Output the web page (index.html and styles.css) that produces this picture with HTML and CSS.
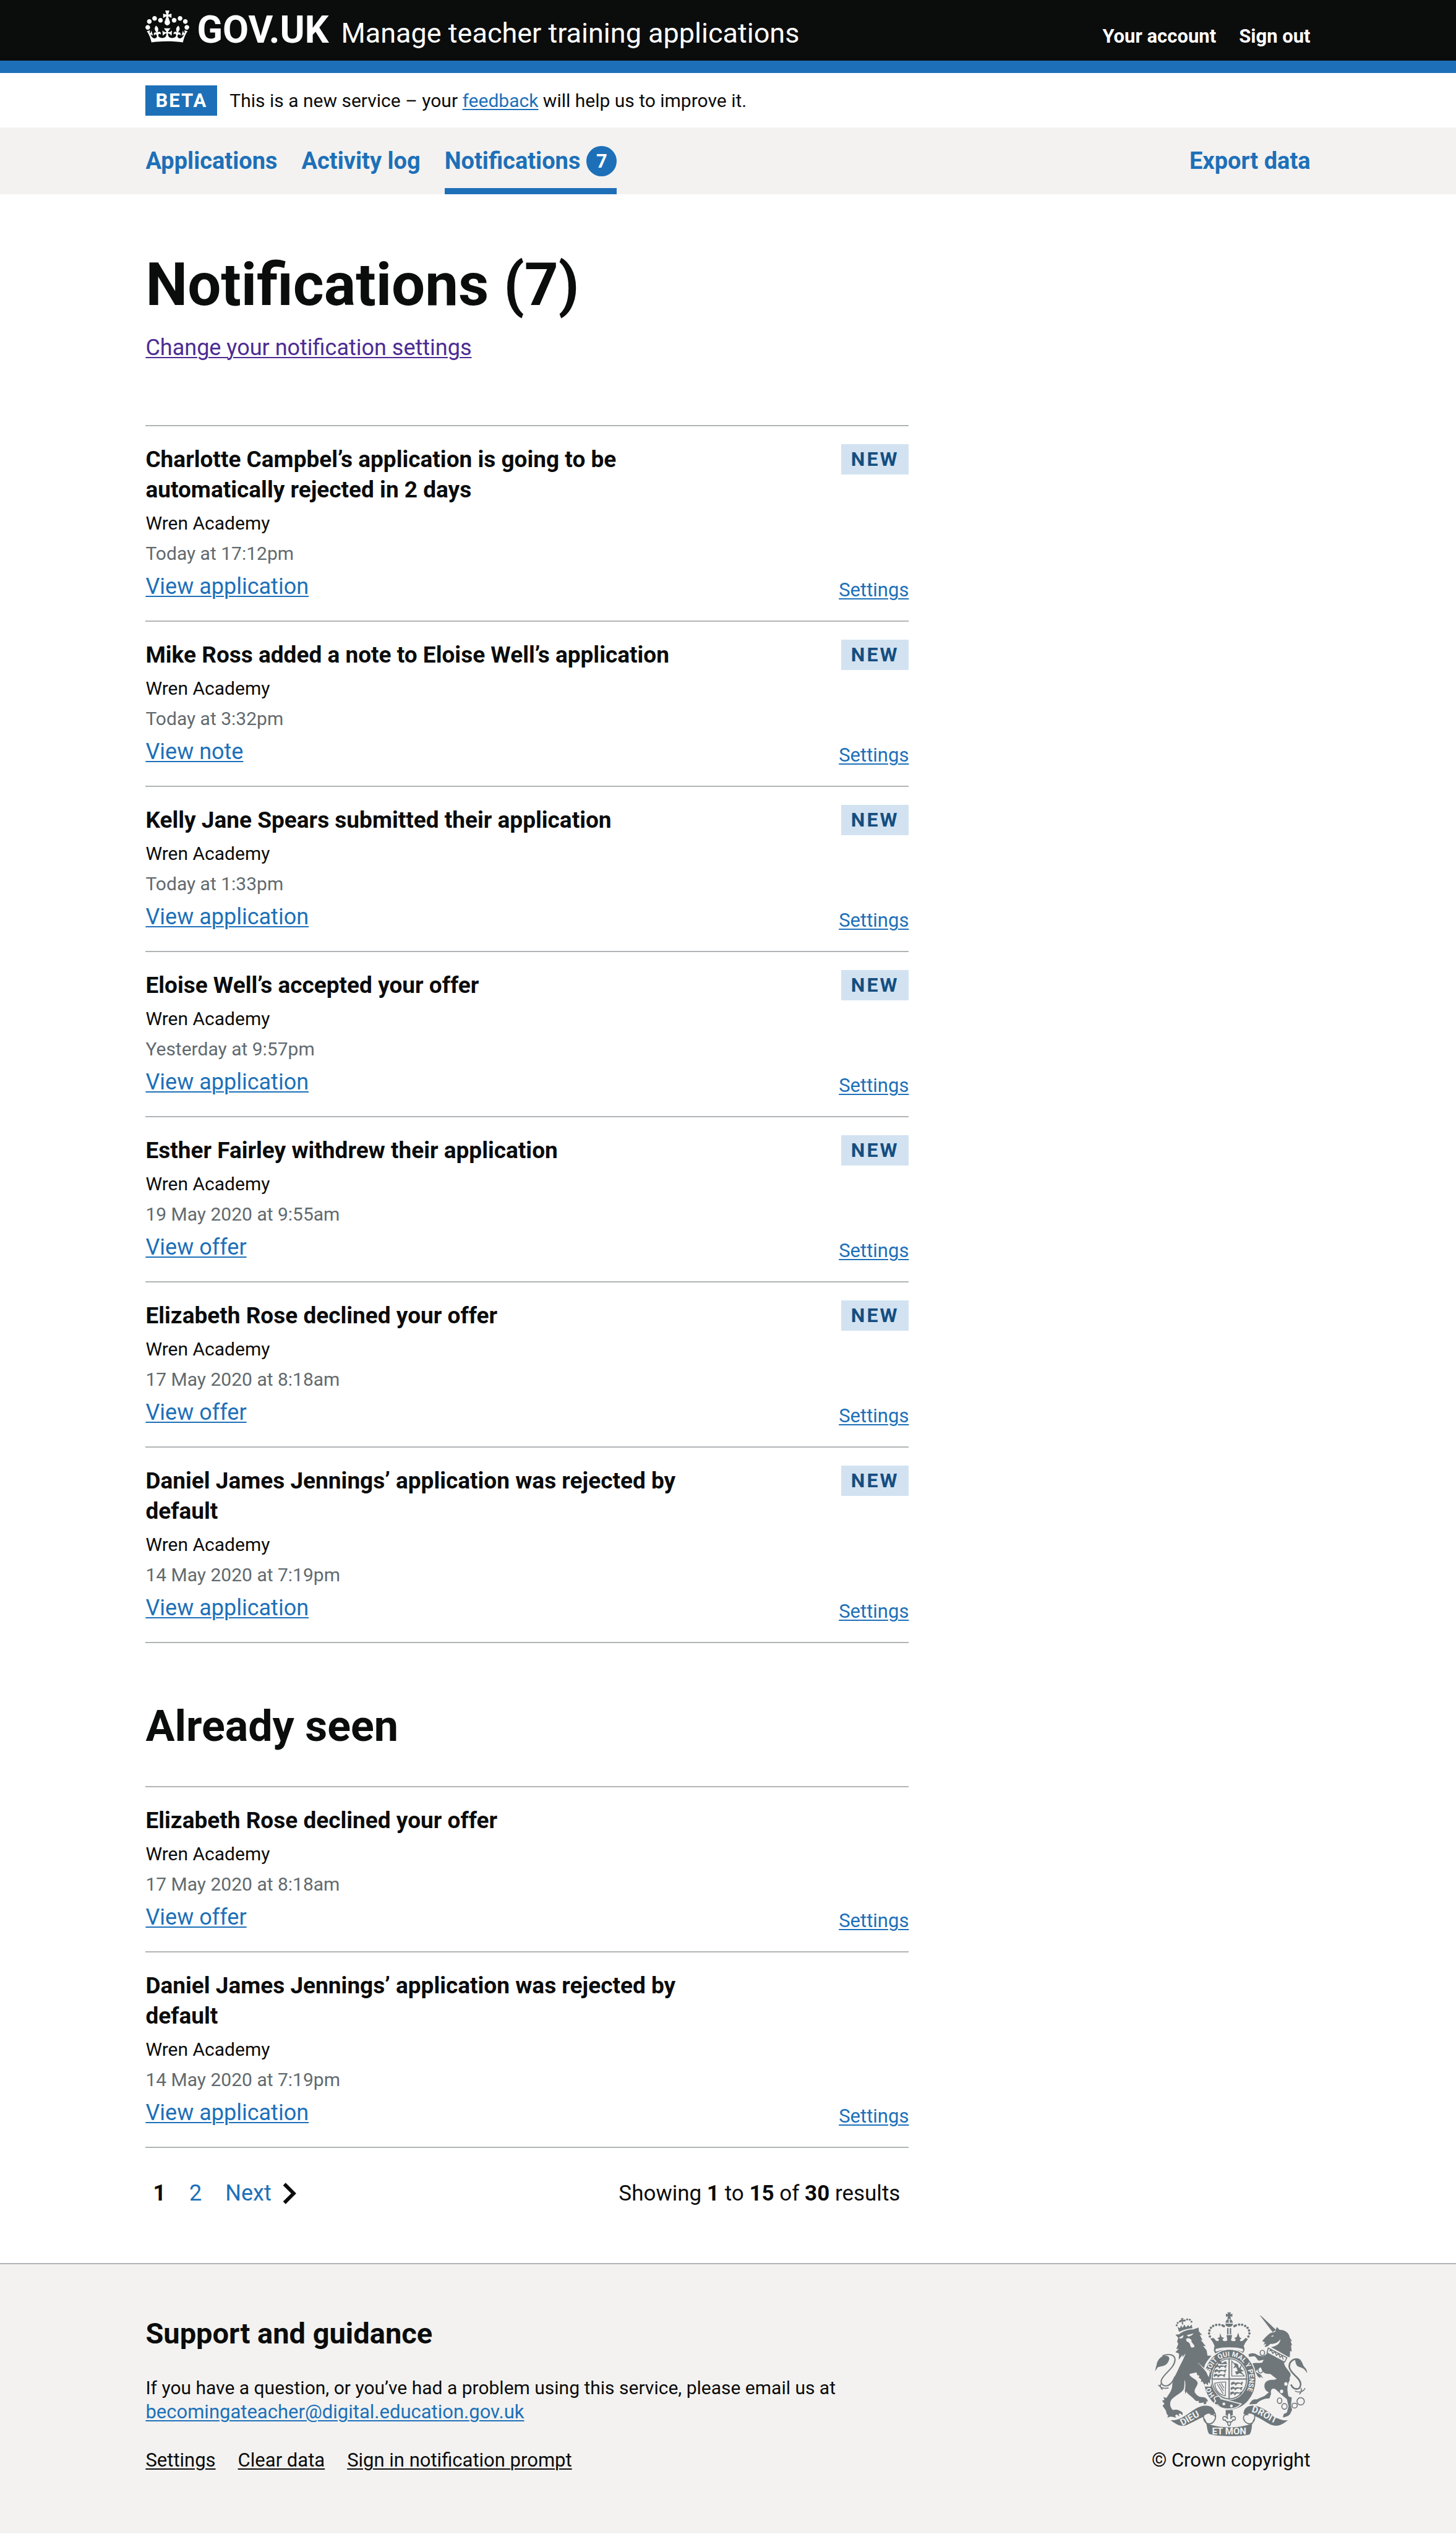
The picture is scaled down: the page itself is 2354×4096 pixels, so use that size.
FILE: index.html
```html
<!DOCTYPE html>
<html lang="en">
<head>
<meta charset="utf-8">
<meta name="viewport" content="width=device-width, initial-scale=1">
<title>Notifications (7) - Manage teacher training applications - GOV.UK</title>
<link rel="stylesheet" href="styles.css">
</head>
<body>
<header class="header">
  <div class="container header__inner">
    <a class="header__logo" href="#">
      <svg class="header__crown" viewBox="0 0 132 97" aria-hidden="true">
        <path fill="currentColor" fill-rule="evenodd" d="M25 30.2c3.5 1.5 7.7-.2 9.1-3.7 1.5-3.6-.2-7.8-3.9-9.2-3.6-1.4-7.6.3-9.1 3.9-1.4 3.5.3 7.5 3.9 9zM9 39.5c3.6 1.5 7.8-.2 9.2-3.7 1.5-3.6-.2-7.8-3.9-9.1-3.6-1.5-7.6.2-9.1 3.8-1.4 3.5.3 7.5 3.8 9zM4.4 57.2c3.5 1.5 7.7-.2 9.1-3.8 1.5-3.6-.2-7.7-3.9-9.1-3.5-1.5-7.6.3-9.1 3.8-1.4 3.5.3 7.6 3.9 9.1zm38.3-21.4c3.5 1.5 7.7-.2 9.1-3.8 1.5-3.6-.2-7.7-3.9-9.1-3.6-1.5-7.6.3-9.1 3.8-1.3 3.6.4 7.7 3.9 9.1zm64.4-5.6c-3.6 1.5-7.8-.2-9.1-3.7-1.5-3.6.2-7.8 3.8-9.2 3.6-1.4 7.7.3 9.2 3.9 1.3 3.5-.4 7.5-3.9 9zm15.9 9.3c-3.6 1.5-7.7-.2-9.1-3.7-1.5-3.6.2-7.8 3.7-9.1 3.6-1.5 7.7.2 9.2 3.8 1.5 3.5-.3 7.5-3.8 9zm4.7 17.7c-3.6 1.5-7.8-.2-9.2-3.8-1.5-3.6.2-7.7 3.9-9.1 3.6-1.5 7.7.3 9.2 3.8 1.3 3.5-.4 7.6-3.9 9.1zM89.3 35.8c-3.6 1.5-7.8-.2-9.2-3.8-1.4-3.6.2-7.7 3.9-9.1 3.6-1.5 7.7.3 9.2 3.8 1.4 3.6-.3 7.7-3.9 9.1zM69.7 17.7l8.9 4.7V9.3l-8.9 2.8c-.2-.3-.5-.6-.9-.9L72.4 0H59.6l3.5 11.2c-.3.3-.6.5-.9.9l-8.8-2.8v13.1l8.8-4.7c.3.3.6.7.9.9l-5 15.4v.1c-.2.8-.4 1.6-.4 2.4 0 4.1 3.1 7.5 7 8.1h.2c.3 0 .7.1 1 .1.4 0 .7 0 1-.1h.2c4-.6 7.1-4.1 7.1-8.1 0-.8-.1-1.7-.4-2.4V34l-5.1-15.4c.4-.2.7-.6 1-.9zM66 92.8c16.9 0 32.8 1.1 47.1 3.2 4-16.9 8.9-26.7 14-33.5l-9.6-3.4c1 4.9 1.1 7.2 0 10.2-1.5-1.4-3-4.3-4.2-8.7L108.6 76c2.8-2 5-3.2 7.5-3.3-4.4 9.4-10 11.9-13.6 11.2-4.3-.8-6.3-4.6-5.6-7.9 1-4.7 5.7-5.9 8-.5 4.3-8.7-3-11.4-7.6-8.8 7.1-7.2 7.9-13.5 2.1-21.1-8 6.1-8.1 12.3-4.5 20.8-4.7-5.4-12.1-2.5-9.5 6.2 3.4-5.2 7.9-2 7.2 3.1-.6 4.3-6.4 7.8-13.5 7.2-10.3-.9-10.9-8-11.2-13.8 2.5-.5 7.1 1.8 11 7.3L80.2 60c-4.1 4.4-8 5.3-12.3 5.4 1.4-4.4 8-11.6 8-11.6H55.5s6.4 7.2 7.9 11.6c-4.2-.1-8-1-12.3-5.4l1.4 16.4c3.9-5.5 8.5-7.7 10.9-7.3-.3 5.8-.9 12.8-11.1 13.8-7.2.6-12.9-2.9-13.5-7.2-.7-5 3.8-8.3 7.1-3.1 2.7-8.7-4.6-11.6-9.4-6.2 3.7-8.5 3.6-14.7-4.6-20.8-5.8 7.6-5 13.9 2.2 21.1-4.7-2.6-11.9.1-7.7 8.8 2.3-5.5 7.1-4.2 8.1.5.7 3.3-1.3 7.1-5.7 7.9-3.5.7-9-1.8-13.5-11.2 2.5.1 4.7 1.3 7.5 3.3l-4.7-15.4c-1.2 4.4-2.7 7.2-4.3 8.7-1.1-3-.9-5.3 0-10.2l-9.5 3.4c5 6.9 9.9 16.7 14 33.5 14.8-2.1 30.8-3.2 47.7-3.2z"/>
      </svg>
      <span class="header__brand">GOV.UK</span>
    </a>
    <a class="header__service" href="#">Manage teacher training applications</a>
    <nav class="header__links" aria-label="Account">
      <a href="#">Your account</a>
      <a href="#">Sign out</a>
    </nav>
  </div>
</header>

<div class="container phase">
  <strong class="phase__tag">BETA</strong>
  <span class="phase__text">This is a new service – your <a class="link" href="#">feedback</a> will help us to improve it.</span>
</div>

<nav class="primary" aria-label="Primary">
  <div class="container primary__inner">
    <a class="primary__link" href="#">Applications</a>
    <a class="primary__link" href="#">Activity log</a>
    <a class="primary__link primary__link--current" href="#" aria-current="page">Notifications <span class="primary__count">7</span></a>
    <a class="primary__link primary__link--end" href="#">Export data</a>
  </div>
</nav>

<main class="container main">
  <h1 class="title">Notifications (7)</h1>
  <p class="intro"><a class="link link--visited" href="#">Change your notification settings</a></p>

  <ul class="feed">
    <li class="item">
      <div class="item__body">
        <h3 class="item__title">Charlotte Campbel’s application is going to be automatically rejected in 2 days</h3>
        <p class="item__org">Wren Academy</p>
        <p class="item__date">Today at 17:12pm</p>
        <a class="link item__action" href="#">View application</a>
      </div>
      <div class="item__side"><strong class="tag">NEW</strong><a class="link item__settings" href="#">Settings</a></div>
    </li>
    <li class="item">
      <div class="item__body">
        <h3 class="item__title">Mike Ross added a note to Eloise Well’s application</h3>
        <p class="item__org">Wren Academy</p>
        <p class="item__date">Today at 3:32pm</p>
        <a class="link item__action" href="#">View note</a>
      </div>
      <div class="item__side"><strong class="tag">NEW</strong><a class="link item__settings" href="#">Settings</a></div>
    </li>
    <li class="item">
      <div class="item__body">
        <h3 class="item__title">Kelly Jane Spears submitted their application</h3>
        <p class="item__org">Wren Academy</p>
        <p class="item__date">Today at 1:33pm</p>
        <a class="link item__action" href="#">View application</a>
      </div>
      <div class="item__side"><strong class="tag">NEW</strong><a class="link item__settings" href="#">Settings</a></div>
    </li>
    <li class="item">
      <div class="item__body">
        <h3 class="item__title">Eloise Well’s accepted your offer</h3>
        <p class="item__org">Wren Academy</p>
        <p class="item__date">Yesterday at 9:57pm</p>
        <a class="link item__action" href="#">View application</a>
      </div>
      <div class="item__side"><strong class="tag">NEW</strong><a class="link item__settings" href="#">Settings</a></div>
    </li>
    <li class="item">
      <div class="item__body">
        <h3 class="item__title">Esther Fairley withdrew their application</h3>
        <p class="item__org">Wren Academy</p>
        <p class="item__date">19 May 2020 at 9:55am</p>
        <a class="link item__action" href="#">View offer</a>
      </div>
      <div class="item__side"><strong class="tag">NEW</strong><a class="link item__settings" href="#">Settings</a></div>
    </li>
    <li class="item">
      <div class="item__body">
        <h3 class="item__title">Elizabeth Rose declined your offer</h3>
        <p class="item__org">Wren Academy</p>
        <p class="item__date">17 May 2020 at 8:18am</p>
        <a class="link item__action" href="#">View offer</a>
      </div>
      <div class="item__side"><strong class="tag">NEW</strong><a class="link item__settings" href="#">Settings</a></div>
    </li>
    <li class="item">
      <div class="item__body">
        <h3 class="item__title">Daniel James Jennings’ application was rejected by default</h3>
        <p class="item__org">Wren Academy</p>
        <p class="item__date">14 May 2020 at 7:19pm</p>
        <a class="link item__action" href="#">View application</a>
      </div>
      <div class="item__side"><strong class="tag">NEW</strong><a class="link item__settings" href="#">Settings</a></div>
    </li>
  </ul>

  <h2 class="subtitle">Already seen</h2>

  <ul class="feed">
    <li class="item">
      <div class="item__body">
        <h3 class="item__title">Elizabeth Rose declined your offer</h3>
        <p class="item__org">Wren Academy</p>
        <p class="item__date">17 May 2020 at 8:18am</p>
        <a class="link item__action" href="#">View offer</a>
      </div>
      <div class="item__side"><a class="link item__settings" href="#">Settings</a></div>
    </li>
    <li class="item">
      <div class="item__body">
        <h3 class="item__title">Daniel James Jennings’ application was rejected by default</h3>
        <p class="item__org">Wren Academy</p>
        <p class="item__date">14 May 2020 at 7:19pm</p>
        <a class="link item__action" href="#">View application</a>
      </div>
      <div class="item__side"><a class="link item__settings" href="#">Settings</a></div>
    </li>
  </ul>

  <div class="pager">
    <nav class="pager__pages" aria-label="Pagination">
      <span class="pager__current" aria-current="page">1</span>
      <a class="pager__link" href="#">2</a>
      <a class="pager__link pager__next" href="#">Next
        <svg class="pager__chevron" viewBox="0 0 22 36" aria-hidden="true"><path d="M2.500 2.500L18 18L2.500 33.500" fill="none" stroke="currentColor" stroke-width="6"/></svg>
      </a>
    </nav>
    <p class="pager__results">Showing <b>1</b> to <b>15</b> of <b>30</b> results</p>
  </div>
</main>

<footer class="footer">
  <div class="container footer__inner">
    <div class="footer__text">
      <h2 class="footer__title">Support and guidance</h2>
      <p class="footer__para">If you have a question, or you’ve had a problem using this service, please email us at</p>
      <p><a class="link" href="#">becomingateacher@digital.education.gov.uk</a></p>
      <ul class="footer__links">
        <li><a class="link link--text" href="#">Settings</a></li>
        <li><a class="link link--text" href="#">Clear data</a></li>
        <li><a class="link link--text" href="#">Sign in notification prompt</a></li>
      </ul>
    </div>
    <a class="footer__copy" href="#">
      <svg class="footer__crest" viewBox="70 94 754 616" aria-hidden="true">
        <defs>
          <path id="ring" d="M367 505C352 490 345 472 341 452M344 392C354 348 392 313 440 313C494 313 536 362 536 426C536 478 512 522 478 540"/>
          <path id="band-left" d="M206 656C248 636 282 606 334 594"/>
          <path id="band-right" d="M546 588C594 596 628 636 694 654"/>
          <g id="charge">
            <path d="M2 6L14 2L20 8L34 5L48 8L56 2L60 8L54 14L58 20L50 18L46 12L30 13L26 20L18 20L22 14L10 14L4 20L0 14Z"/>
          </g>
        </defs>
        <!-- lion -->
        <g class="crest-fill">
          <path d="M190 192L182 168L194 174L200 160L207 172L216 156L224 169L236 158L240 168L252 156L256 174C235 176 210 182 190 192Z"/>
          <circle cx="178" cy="160" r="5"/><circle cx="183" cy="148" r="5"/><circle cx="194" cy="141" r="5"/><circle cx="218" cy="136" r="5"/><circle cx="230" cy="131" r="5"/><circle cx="243" cy="132" r="5"/><circle cx="251" cy="142" r="5"/>
          <path d="M198 126L212 124L209 133L216 132L216 142L209 140L210 156L204 156L203 141L196 143L195 133L202 134Z"/>
          <path d="M172 206L190 204C206 190 234 180 260 180L286 171L288 190L304 208L292 207L306 234L296 231L322 263L308 261L326 284L330 310L350 310C332 330 318 348 314 366C318 388 340 398 344 424L348 444L336 438L334 456L324 444L316 452L308 436L298 440L300 424L286 418L292 408L280 406L276 392C262 396 248 396 240 402C252 424 280 424 282 446C278 464 262 474 268 492C280 508 292 516 306 514C320 514 332 524 332 536L324 534C328 544 322 550 312 550L312 540C306 542 296 544 286 542L288 532C278 538 270 532 262 522C246 506 230 498 226 486L222 500L218 482C222 462 222 446 218 428C214 448 220 470 208 482C190 500 160 514 150 530C142 546 146 566 160 578C174 572 196 578 208 592L206 604L196 594L188 598L192 610L178 600L170 606L176 616C160 612 148 608 142 612L132 616L136 604C124 598 130 584 120 574L108 556L118 548L106 532L118 528L112 514L128 518C138 500 156 482 156 456C158 424 178 398 192 364C204 340 216 318 222 298L206 318L208 304L188 330L190 300L172 292L188 276L176 276L186 252L180 240L186 222Z"/>
          <path d="M72 386C76 358 82 352 80 346C94 314 114 304 134 312C146 318 142 330 134 344C124 364 96 360 84 368Z"/>
        </g>
        <g class="crest-back">
          <path d="M190 220L212 208L208 222L194 226Z"/><path d="M228 208L262 200L252 210L236 216Z"/>
          <path d="M224 228C230 220 246 222 252 234C246 242 262 250 266 262C264 272 248 272 246 262C244 248 238 242 228 240Z"/>
        </g>
        <g class="crest-line">
          <path class="w6" d="M108 310C140 298 170 304 170 330C168 372 112 398 102 432C98 458 128 468 148 448C158 438 164 426 170 412"/>
          <path class="w5" d="M88 454C100 470 118 474 138 468M100 448C96 458 96 466 108 478"/>
        </g>
        <!-- unicorn -->
        <g class="crest-fill">
          <path d="M588 110L596 114L668 182L652 194Z"/>
          <path d="M600 238C612 222 626 208 640 198L664 192L672 168L686 182C712 180 734 198 736 220L748 238L740 236L748 260L742 258L746 290L738 286L736 318L722 312L684 290L644 268C672 262 690 250 690 228C676 250 652 252 640 252C632 262 618 270 612 264L622 250L606 256L614 244Z"/>
          <path d="M626 298L706 340C712 366 722 372 736 392L736 430C722 456 722 480 730 510L746 516L742 556L748 576L738 598C726 610 716 612 702 614L706 598L722 590L730 560L722 524C696 504 680 488 664 474C648 468 640 478 644 498L636 520C610 520 586 530 572 548L536 550C544 534 556 520 572 526L612 508L634 490C610 484 604 452 620 438C636 424 660 432 672 424L640 400C616 400 600 396 594 366C584 372 572 380 568 390C578 396 596 398 604 422L592 412L590 420L578 412L570 396C560 394 552 380 552 362L530 372L546 350C562 342 580 348 600 344L608 330L584 334C574 330 572 316 560 312L536 316L532 304C546 294 560 296 574 304C590 314 596 310 606 312Z"/>
          <path d="M822 396C822 370 806 370 800 350C794 332 780 318 762 324C764 342 766 362 786 366C806 372 812 380 822 396Z"/>
        </g>
        <g class="crest-line">
          <path class="w8" d="M788 334C760 316 732 336 734 366C738 400 790 418 790 450C788 482 756 482 742 452"/>
          <path class="w5" d="M812 470C802 488 782 494 762 484M792 470C796 482 790 494 784 500"/>
          <path class="w5" d="M630 272L722 320L710 342L624 296Z"/>
          <path class="w5" d="M636 288L644 280L652 298L664 290L670 308L682 300L688 318L698 310L704 328"/>
          <ellipse class="w5" cx="601" cy="296" rx="11" ry="13"/><ellipse class="w5" cx="592" cy="380" rx="12" ry="15"/><ellipse class="w5" cx="585" cy="322" rx="7" ry="9"/>
          <ellipse class="w5" cx="726" cy="404" rx="12" ry="14"/><ellipse class="w5" cx="686" cy="532" rx="11" ry="14"/><ellipse class="w5" cx="710" cy="560" rx="13" ry="14"/><ellipse class="w5" cx="760" cy="556" rx="13" ry="12"/><circle class="w5" cx="790" cy="535" r="18"/>
        </g>
        <g class="crest-back"><ellipse cx="717" cy="449" rx="8" ry="9"/><ellipse cx="696" cy="486" rx="8" ry="9"/><path d="M642 214L656 208L654 216Z"/></g>
        <!-- crown -->
        <g class="crest-fill">
          <path d="M428 96L446 96L442 106L453 102L453 118L442 115L447 128L427 128L432 115L421 118L421 102L432 106Z"/>
          <path d="M419 147C421 132 434 128 435 129L435 147ZM440 129C448 130 454 138 455 147L440 147Z"/>
          <path d="M418 152L456 152C454 166 444 168 437 168C430 168 420 166 418 152Z"/>
          <path d="M427 174H434V204H427ZM440 174H447V204H440Z"/>
          <circle cx="411" cy="164" r="6"/><circle cx="404" cy="160" r="6"/><circle cx="389" cy="157" r="6"/><circle cx="373" cy="158" r="6"/><circle cx="358" cy="163" r="6"/><circle cx="347" cy="172" r="6"/><circle cx="340" cy="185" r="6"/><circle cx="338" cy="200" r="6"/><circle cx="342" cy="215" r="6"/>
          <circle cx="463" cy="164" r="6"/><circle cx="470" cy="160" r="6"/><circle cx="486" cy="156" r="6"/><circle cx="501" cy="157" r="6"/><circle cx="516" cy="163" r="6"/><circle cx="528" cy="172" r="6"/><circle cx="535" cy="185" r="6"/><circle cx="537" cy="200" r="6"/><circle cx="532" cy="215" r="6"/>
          <path d="M344 226L360 222L372 236C380 240 388 238 386 228L378 224L390 218L392 198L400 218L412 222L404 230C408 240 420 240 428 234L424 208H452L446 234C456 240 468 240 470 230L462 222L474 218L482 196L488 218L498 224L490 230C490 240 500 240 506 234L518 222L530 228C518 242 510 256 508 268C466 258 408 258 366 268C364 254 354 238 344 226Z"/>
          <path d="M366 262C408 252 466 252 508 262L512 270C516 284 506 296 504 298C470 282 406 282 370 298C360 290 360 274 366 262Z"/>
        </g>
        <path class="crest-back" d="M372 276C406 266 470 266 504 276C508 282 506 288 502 290C470 276 406 276 374 290C368 286 368 280 372 276Z"/>
        <!-- garter and shield -->
        <ellipse class="crest-back" cx="440" cy="428" rx="132" ry="152"/>
        <ellipse class="crest-fill" cx="440" cy="428" rx="127" ry="147"/>
        <ellipse class="crest-back" cx="438" cy="424" rx="91" ry="105"/>
        <ellipse class="crest-line w5" cx="438" cy="424" rx="85" ry="99"/>
        <path class="crest-line w6" d="M437 324V524M350 425H526"/>
        <g class="crest-fill">
          <use href="#charge" x="366" y="352"/><use href="#charge" x="364" y="374"/><use href="#charge" x="360" y="396"/>
          <use href="#charge" x="446" y="436"/><use href="#charge" x="444" y="460"/><use href="#charge" x="442" y="484"/>
          <path d="M462 344L480 352L486 372L500 350L494 376L510 384L494 390L506 404L488 396L474 404L466 388L480 386L472 366L456 372L466 358Z"/>
          <path d="M374 338L392 334L402 346L420 336L428 350L410 352L392 352Z"/>
        </g>
        <g class="crest-line w4">
          <path d="M450 336L512 410H450Z"/>
          <path d="M366 446C384 444 404 438 420 440L418 508L404 504C384 496 368 476 366 446ZM378 450L408 498M388 448L410 484M398 446L412 470"/>
        </g>
        <!-- paw and buckle over the garter -->
        <path class="crest-back" d="M284 344L308 366L342 388L336 420L350 430L346 462L318 462L306 430Z"/>
        <path class="crest-fill" d="M286 346C304 370 326 384 330 404L344 428L342 448L334 440L332 456L322 446L314 452L304 434L290 418Z"/>
        <path class="crest-fill crest-edge" d="M362 520C374 504 392 508 396 522L496 548C470 580 400 580 380 552C362 556 360 540 370 534Z"/>
        <g class="crest-back"><circle cx="411" cy="548" r="7"/><circle cx="448" cy="558" r="7"/></g>
        <text class="crest-text ring-text"><textPath href="#ring">HO SOIT QUI MAL Y PENSE</textPath></text>
        <!-- fleur-de-lis -->
        <path class="crest-fill" d="M420 578H455V604H420Z"/>
        <path class="crest-back w5 crest-outline" d="M437 588C448 600 448 612 444 622C452 606 470 606 468 622C466 630 458 630 456 624C456 636 446 636 444 640L444 646C442 658 432 658 430 646L430 640C428 636 418 636 418 624C416 630 408 630 406 622C404 606 422 606 430 622C426 612 426 600 437 588ZM422 636H452"/>
        <!-- motto ribbon -->
        <g class="crest-fill">
          <path d="M148 628C180 630 204 618 232 598C260 578 290 554 326 556C352 558 366 572 368 596L352 602C344 590 318 596 310 612C286 622 254 640 232 650C206 662 184 656 148 628Z"/>
          <path d="M728 628C700 632 676 620 652 604C626 584 588 554 550 556C522 558 508 574 508 598L524 602C530 590 556 594 564 608C592 618 620 640 642 650C676 662 692 654 728 628Z"/>
          <path d="M324 642C380 670 492 670 550 644C550 666 546 688 538 698C500 710 376 710 338 696C330 684 328 664 324 642Z"/>
        </g>
        <g class="crest-line w5">
          <path d="M312 604C306 626 320 646 340 646C356 646 370 628 370 614C368 602 354 598 344 600M366 590C374 604 372 626 352 644"/>
          <path d="M562 604C568 626 554 646 536 646C518 644 506 628 508 612C510 602 524 598 532 602M326 646L314 620M550 646L562 620"/>
        </g>
        <g class="crest-text band-text">
          <text><textPath href="#band-left">DIEU</textPath></text>
          <text><textPath href="#band-right">DROIT</textPath></text>
          <text x="437" y="699" text-anchor="middle">ET MON</text>
        </g>
      </svg>
      <span>© Crown copyright</span>
    </a>
  </div>
</footer>
</body>
</html>
```
FILE: styles.css
```css
:root {
  --blue: #1d70b8;
  --black: #0b0c0c;
  --grey: #f3f2f1;
  --mid-grey: #b1b4b6;
  --crest: #6f777b;
}

* {
  box-sizing: border-box;
  margin: 0;
  padding: 0;
}

body {
  background: #fff;
  color: var(--black);
  font-family: Roboto, "Liberation Sans", Arial, sans-serif;
  font-size: 36px;
  line-height: 49px;
}

ul {
  list-style: none;
}

a {
  color: inherit;
  text-decoration: none;
}

.container {
  width: 80%;
  margin: 0 auto;
}

.link {
  color: var(--blue);
  text-decoration: underline;
  text-decoration-thickness: 2px;
  text-underline-offset: 3px;
}

.link--visited {
  color: #4c2c92;
}

.link--text {
  color: var(--black);
}

/* Header */
.header {
  background: var(--black);
  border-bottom: 20px solid var(--blue);
  color: #fff;
}

.header__inner {
  display: flex;
  align-items: baseline;
  height: 98px;
  padding-top: 17px;
}

.header__logo {
  display: flex;
  align-items: baseline;
  gap: 12px;
  margin-right: 20px;
}

.header__crown {
  width: 71px;
  height: 52px;
  margin-bottom: -4px;
}

.header__brand {
  font-size: 61px;
  font-weight: 700;
}

.header__service {
  font-size: 45px;
}

.header__links {
  display: flex;
  gap: 37px;
  margin-left: auto;
  font-size: 31px;
  font-weight: 700;
}

/* Phase banner */
.phase {
  display: flex;
  align-items: center;
  gap: 20px;
  height: 88px;
  font-size: 30px;
}

.phase__tag {
  padding: 0 16px;
  background: var(--blue);
  color: #fff;
  font-size: 31px;
  letter-spacing: 2px;
}

/* Primary navigation */
.primary {
  background: var(--grey);
}

.primary__inner {
  display: flex;
  gap: 39px;
}

.primary__link {
  display: flex;
  align-items: center;
  gap: 10px;
  height: 108px;
  border-top: 10px solid transparent;
  border-bottom: 10px solid transparent;
  color: var(--blue);
  font-size: 38px;
  font-weight: 700;
}

.primary__link--current {
  border-bottom-color: var(--blue);
}

.primary__link--end {
  margin-left: auto;
}

.primary__count {
  width: 49px;
  border-radius: 50%;
  background: var(--blue);
  color: #fff;
  font-size: 31px;
  text-align: center;
}

/* Content */
.main {
  padding: 97px 0 88px;
}

.title {
  margin-bottom: 29px;
  font-size: 96px;
  line-height: 98px;
}

.intro {
  margin-bottom: 100px;
}

.feed {
  max-width: 1234px;
  border-bottom: 2px solid var(--mid-grey);
}

.item {
  display: flex;
  justify-content: space-between;
  padding: 29px 0 30px;
  border-top: 2px solid var(--mid-grey);
}

.item__body {
  display: flex;
  flex-direction: column;
  align-items: flex-start;
  gap: 10px;
  width: 75%;
}

.item__title {
  font-size: 37px;
}

.item__org,
.item__date {
  font-size: 30px;
  line-height: 39px;
}

.item__date {
  color: #626a6e;
}

.item__side {
  display: flex;
  flex-direction: column;
  align-items: flex-end;
}

.tag {
  padding: 0 16px;
  background: #d2e2f1;
  color: #144e81;
  font-size: 32px;
  letter-spacing: 3px;
}

.item__settings {
  margin-top: auto;
  font-size: 31px;
  line-height: 39px;
}

.subtitle {
  margin: 97px 0 60px;
  font-size: 70px;
  line-height: 74px;
}

.pager {
  display: flex;
  justify-content: space-between;
  max-width: 1234px;
  margin-top: 49px;
  padding: 0 14px 0 12px;
}

.pager__pages {
  display: flex;
  gap: 38px;
}

.pager__current {
  font-weight: 700;
}

.pager__link {
  color: var(--blue);
}

.pager__next {
  display: flex;
  align-items: center;
  gap: 18px;
}

.pager__chevron {
  width: 22px;
  height: 35px;
  color: var(--black);
}

.pager__results {
  font-size: 35px;
}

/* Footer */
.footer {
  background: var(--grey);
  border-top: 2px solid var(--mid-grey);
  font-size: 31px;
  line-height: 39px;
}

.footer__inner {
  display: flex;
  justify-content: space-between;
  align-items: flex-end;
  padding: 77px 0 99px;
}

.footer__title {
  margin-bottom: 44px;
  font-size: 47px;
  line-height: 49px;
}

.footer__para {
  font-size: 30px;
}

.footer__links {
  display: flex;
  gap: 36px;
  margin-top: 39px;
}

.footer__copy {
  display: flex;
  flex-direction: column;
  align-items: center;
  gap: 18px;
}

.footer__crest {
  width: 247px;
  height: 202px;
}

.crest-fill {
  fill: var(--crest);
}

.crest-back {
  fill: var(--grey);
}

.crest-line {
  fill: none;
  stroke: var(--crest);
}

.crest-outline {
  stroke: var(--crest);
}

.crest-edge {
  stroke: var(--grey);
  stroke-width: 5px;
}

.w4 {
  stroke-width: 4px;
}

.w5 {
  stroke-width: 5px;
}

.w6 {
  stroke-width: 6px;
}

.w8 {
  stroke-width: 8px;
}

.crest-text {
  fill: var(--grey);
  font-weight: 700;
}

.ring-text {
  font-size: 34px;
}

.band-text {
  font-size: 46px;
}
```
